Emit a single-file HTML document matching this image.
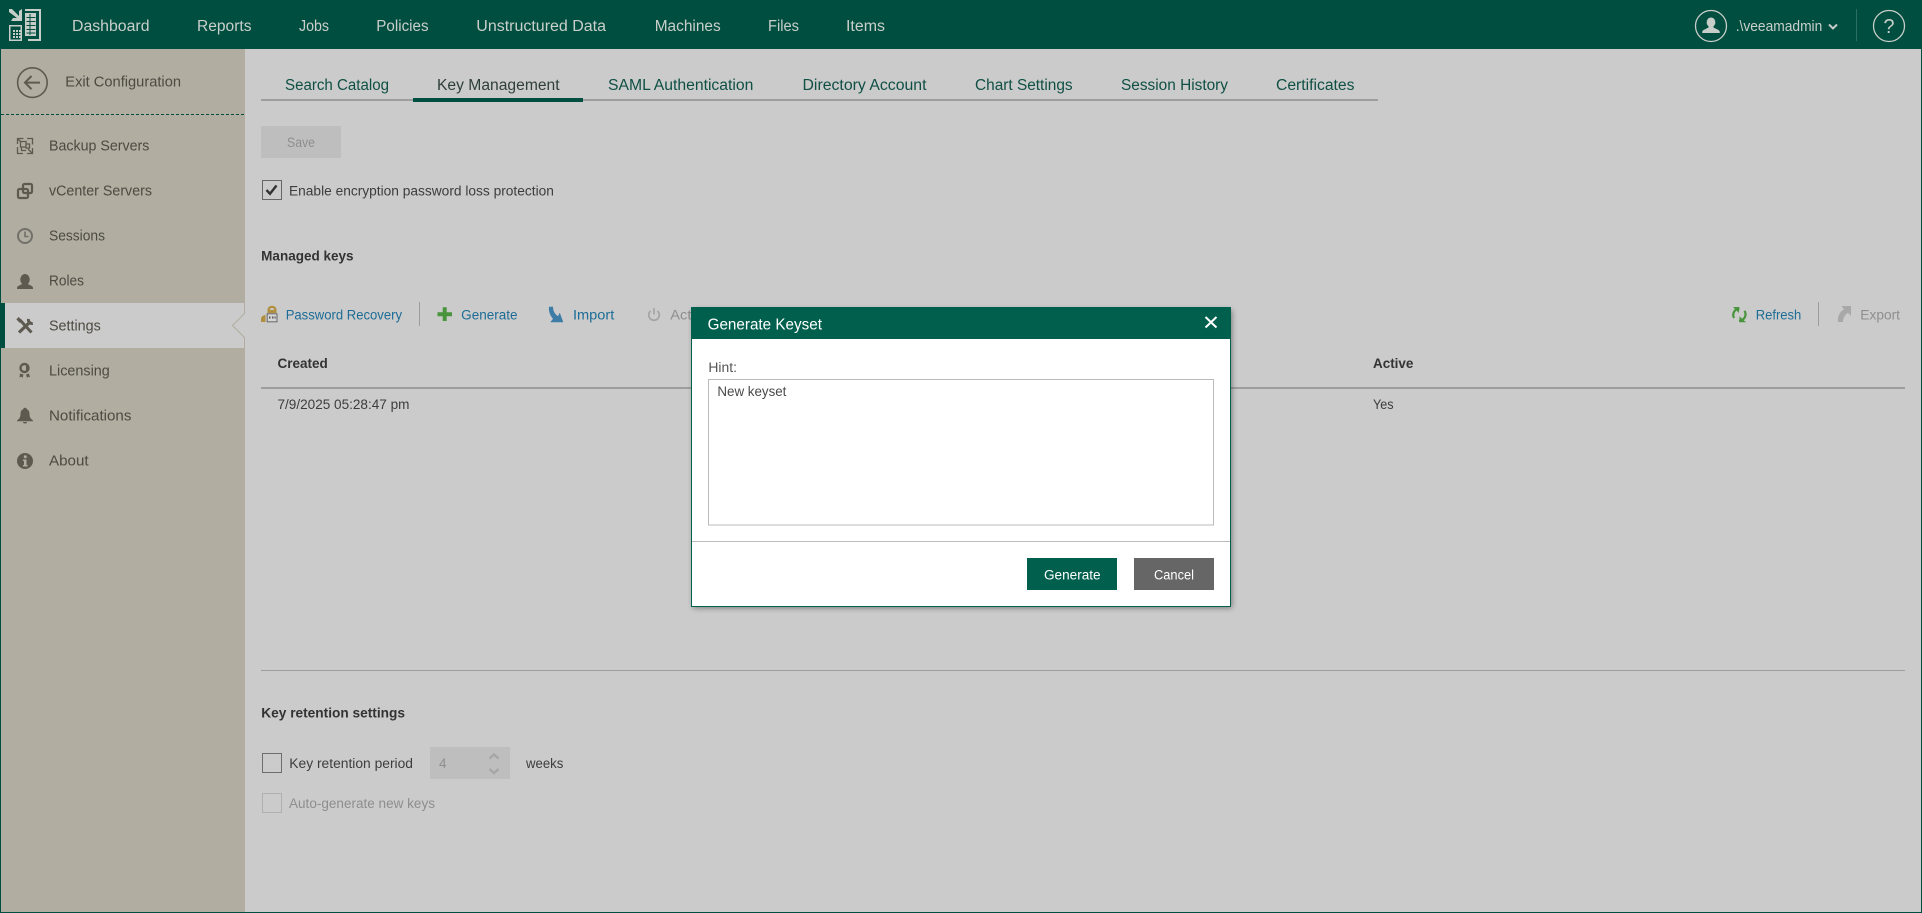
<!DOCTYPE html>
<html><head><meta charset="utf-8"><title>Key Management</title>
<style>
html,body{margin:0;padding:0;background:#cbcbcb;overflow:hidden}
svg{display:block}
text{font-family:"Liberation Sans",sans-serif;font-size:13.400px;fill:#3d3d3d}
.nav{font-size:15.500px;fill:#c9cfcb}
.tab{font-size:15.500px;fill:#0f4f44}
.side{font-size:14.500px;fill:#4d4a42}
.b{font-weight:bold;fill:#333}
.link{fill:#1c6c96}
.dis{fill:#8e8e8e}
.ic{fill:#5e5a50}
</style></head><body>
<svg width="1922" height="913" viewBox="0 0 1922 913" xmlns="http://www.w3.org/2000/svg">
<defs><filter id="sh" x="-5%" y="-5%" width="110%" height="110%"><feGaussianBlur stdDeviation="3"/></filter></defs>
<rect width="1922" height="913" fill="#cbcbcb"/>
<!-- sidebar -->
<rect x="1" y="49" width="244" height="864" fill="#b1ada1"/>
<rect x="0" y="49" width="1" height="864" fill="#004e3f"/>
<rect x="1921" y="49" width="1" height="864" fill="#004e3f"/>
<rect x="0" y="912" width="1922" height="1" fill="#004e3f"/>
<!-- header -->
<rect width="1922" height="49" fill="#004e3f"/>
<g fill="#c7cdc9">
<path d="M9 9h3l7 7v-5l3-2v12H11l2-3h4L9 12z"/>
<path d="M9 25h13v16H9zM10.500 26.500v13h10v-13z" fill-rule="evenodd"/>
<path d="M13 30h2v2h-2zM16 30h2v2h-2zM19 30h1.500v2H19zM13 33h2v2h-2zM16 33h2v2h-2zM19 33h1.500v2H19zM13 36h2v2h-2zM16 36h2v2h-2zM19 36h1.500v2H19z"/>
<path d="M25 13h11v23H25z"/>
<path d="M25 9h16v32H28v-2h11V11H25z"/>
</g>
<path d="M30 14v21M26.500 17.500h9M26.500 21.500h9M26.500 25.500h9M26.500 29.500h9M26.500 33h9" stroke="#004e3f" stroke-width="1" fill="none"/>
<text class="nav" x="72" y="31" textLength="77.500" lengthAdjust="spacingAndGlyphs">Dashboard</text>
<text class="nav" x="197" y="31" textLength="54.500" lengthAdjust="spacingAndGlyphs">Reports</text>
<text class="nav" x="299" y="31" textLength="30" lengthAdjust="spacingAndGlyphs">Jobs</text>
<text class="nav" x="376.300" y="31" textLength="52.300" lengthAdjust="spacingAndGlyphs">Policies</text>
<text class="nav" x="476.300" y="31" textLength="129.700" lengthAdjust="spacingAndGlyphs">Unstructured Data</text>
<text class="nav" x="654.700" y="31" textLength="66" lengthAdjust="spacingAndGlyphs">Machines</text>
<text class="nav" x="768" y="31" textLength="31" lengthAdjust="spacingAndGlyphs">Files</text>
<text class="nav" x="846" y="31" textLength="39" lengthAdjust="spacingAndGlyphs">Items</text>
<circle cx="1711" cy="26" r="15.500" fill="none" stroke="#c7cdc9" stroke-width="1.300"/>
<path d="M1711 17.500a4.300 4.800 0 0 1 2.500 8.700v1.300l5 2.500c1 .5 1.300 1.500 1.300 3h-17.600c0-1.500.3-2.500 1.300-3l5-2.500v-1.300a4.300 4.800 0 0 1 2.500-8.700z" fill="#c7cdc9"/>
<text class="nav" style="font-size:14.400px" x="1735.700" y="31" textLength="86.600" lengthAdjust="spacingAndGlyphs">.\veeamadmin</text>
<path d="M1829 24.500l4 4 4-4" fill="none" stroke="#c7cdc9" stroke-width="2"/>
<rect x="1856" y="9" width="1" height="32" fill="#2b6f60"/>
<circle cx="1889" cy="26" r="15.500" fill="none" stroke="#c7cdc9" stroke-width="1.300"/>
<text class="nav" style="font-size:20px" x="1883.500" y="33" textLength="11" lengthAdjust="spacingAndGlyphs">?</text>
<!-- sidebar content -->
<circle cx="32.400" cy="82.600" r="14.800" fill="none" stroke="#5e5a50" stroke-width="1.600"/>
<path d="M40 82.600H26M31.500 76l-6.500 6.600 6.500 6.600" fill="none" stroke="#5e5a50" stroke-width="2"/>
<text class="side" x="65.300" y="86.700" textLength="115.700" lengthAdjust="spacingAndGlyphs">Exit Configuration</text>
<line x1="1" y1="114.500" x2="245" y2="114.500" stroke="#004e3f" stroke-width="1" stroke-dasharray="3 2"/>

<g fill="none" stroke="#5e5a50" stroke-width="1.300">
<path d="M17.500 144v-5.500h6M27 138.500h5.500v6M32.500 148v5.500H27M23 153.500h-5.500V147"/>
<path d="M20.500 141.500h5.500v5.500h-5.500zM26 144h3.500v4H26zM21.500 147v3.500h4.500"/>
<path d="M18 139l3 3M28 149l4 4"/>
</g>
<text class="side" x="49" y="150.700" textLength="100.400" lengthAdjust="spacingAndGlyphs">Backup Servers</text>
<g fill="none" stroke="#5e5a50" stroke-width="2.200"><rect x="18" y="189" width="10" height="9" rx="1.500"/><rect x="23" y="184" width="9" height="9" rx="1.500"/></g>
<text class="side" x="49" y="195.700" textLength="103" lengthAdjust="spacingAndGlyphs">vCenter Servers</text>
<circle cx="25" cy="236" r="7" fill="none" stroke="#72706a" stroke-width="2"/>
<path d="M25 231.500v5h3.500" fill="none" stroke="#72706a" stroke-width="1.600"/>
<text class="side" x="49" y="240.700" textLength="56" lengthAdjust="spacingAndGlyphs">Sessions</text>
<path class="ic" d="M25 274a5 5.500 0 0 1 3.300 9.300v1l3.700 1.800c.8.500 1 1.400 1 2.900H17c0-1.500.2-2.400 1-2.900l3.700-1.800v-1a5 5.500 0 0 1 3.300-9.300z"/>
<text class="side" x="49" y="285.700" textLength="35" lengthAdjust="spacingAndGlyphs">Roles</text>

<rect x="0" y="303" width="5" height="45" fill="#004e3f"/>
<rect x="5" y="303" width="240" height="45" fill="#cbcbcb"/>
<path d="M244.500 303v10.500l-12 12 12 12V348" fill="none" stroke="#b1ada1" stroke-width="1"/>
<g fill="none" stroke="#5e5a50"><path d="M20 320l11.500 12.500" stroke-width="3"/><path d="M29 323l-10 9.500" stroke-width="3.200"/><path d="M28.500 319a3.800 3.800 0 0 0 4.300 4.500" stroke-width="3"/><path d="M17.500 318.200l3.500 3.500" stroke-width="3.400"/></g>
<text class="side" x="49" y="330.700" textLength="51.800" lengthAdjust="spacingAndGlyphs">Settings</text>

<circle cx="24.500" cy="368" r="4" fill="none" stroke="#5e5a50" stroke-width="2.400"/>
<path d="M26 364.500a4 4 0 0 1 0 7z" fill="#5e5a50"/>
<path class="ic" d="M20 373.500l3.500 1-1 3.500-1-1.200-2 .5zM29 373.500l-3 1 1 3.500 1-1.200 2 .5z"/>
<text class="side" x="49" y="375.700" textLength="60.800" lengthAdjust="spacingAndGlyphs">Licensing</text>
<path class="ic" d="M25 407.700c1.200 0 1.800.7 1.800 1.600 2 .7 2.700 2.500 2.700 5 0 3 1.300 4.700 3.500 6.200v.8H17v-.8c2.200-1.500 3.500-3.200 3.500-6.200 0-2.500.7-4.300 2.700-5 0-.9.600-1.600 1.800-1.600zM23 422h4a2 1.500 0 0 1-4 0z"/>
<text class="side" x="49" y="420.700" textLength="82.400" lengthAdjust="spacingAndGlyphs">Notifications</text>
<circle class="ic" cx="25" cy="461" r="8"/>
<circle cx="25.300" cy="456.800" r="1.500" fill="#b1ada1"/>
<path d="M23 459.500h3.500v5.500h1v1.500H23V465h1v-4h-1z" fill="#b1ada1"/>
<text class="side" x="49" y="465.700" textLength="39.600" lengthAdjust="spacingAndGlyphs">About</text>

<!-- tabs -->
<rect x="261" y="99" width="1117" height="2" fill="#9e9e9e"/>
<rect x="413" y="98" width="170" height="4" fill="#004e3f"/>
<text class="tab" x="285" y="90" textLength="104" lengthAdjust="spacingAndGlyphs">Search Catalog</text>
<text class="tab" style="fill:#2f3f3b" x="437" y="90" textLength="122.600" lengthAdjust="spacingAndGlyphs">Key Management</text>
<text class="tab" x="608" y="90" textLength="145.400" lengthAdjust="spacingAndGlyphs">SAML Authentication</text>
<text class="tab" x="802.500" y="90" textLength="124" lengthAdjust="spacingAndGlyphs">Directory Account</text>
<text class="tab" x="975" y="90" textLength="97.600" lengthAdjust="spacingAndGlyphs">Chart Settings</text>
<text class="tab" x="1121" y="90" textLength="107" lengthAdjust="spacingAndGlyphs">Session History</text>
<text class="tab" x="1276" y="90" textLength="78.500" lengthAdjust="spacingAndGlyphs">Certificates</text>

<rect x="261" y="126" width="80" height="32" fill="#bebebe"/>
<text class="dis" x="287" y="147" textLength="28" lengthAdjust="spacingAndGlyphs">Save</text>
<rect x="262.500" y="180.500" width="19" height="19" fill="none" stroke="#666"/>
<path d="M266.500 190l3.500 3.800 6.500-8.300" fill="none" stroke="#333" stroke-width="2.400"/>
<text x="289" y="195.300" textLength="264.900" lengthAdjust="spacingAndGlyphs">Enable encryption password loss protection</text>
<text class="b" x="261.200" y="260.700" textLength="92.300" lengthAdjust="spacingAndGlyphs">Managed keys</text>

<!-- toolbar -->
<path d="M267.500 313v-3.500a4.500 3.800 0 0 1 9 0v3.500h-2.500v-3.500a2 1.500 0 0 0-4 0v3.500z" fill="#b08f3e"/>
<path d="M270 310h4v3h-4z" fill="#b08f3e"/>
<rect x="267.200" y="313.800" width="9.800" height="8" fill="#d5d5d5" stroke="#666"/>
<path d="M269 316.500h1.500v2H269zM272 316.500h1.500v2H272zM274.500 316.500h1.200v2h-1.200z" fill="#555"/>
<path d="M261 322v-3c0-2 2-4 4.500-4v7z" fill="#b08f3e"/>
<text class="link" x="285.700" y="319.300" textLength="116.300" lengthAdjust="spacingAndGlyphs">Password Recovery</text>
<rect x="419" y="302" width="1" height="24" fill="#9c9c9c"/>
<path d="M442.700 307.300h4v5h5.300v4h-5.300v4.700h-4v-4.700h-5.200v-4h5.200z" fill="#49953d"/>
<text class="link" x="461.200" y="319.300" textLength="56.300" lengthAdjust="spacingAndGlyphs">Generate</text>
<path d="M549 306.700h4c0 4 1.500 7 5 9.500l1.800-3.500 3.500 9.600h-13l2.700-3.500c-3-3.500-4.500-7.500-4-12.100z" fill="#3c7ca6"/>
<text class="link" x="573" y="319.300" textLength="41.300" lengthAdjust="spacingAndGlyphs">Import</text>
<path d="M650.500 311a5.300 5.300 0 1 0 7 0" fill="none" stroke="#a3a3a3" stroke-width="1.600"/>
<path d="M654 308v6.500" stroke="#a3a3a3" stroke-width="1.600"/>
<text class="dis" x="670.300" y="319.300" textLength="52" lengthAdjust="spacingAndGlyphs">Activate</text>
<g fill="none" stroke="#49953d" stroke-width="2.200"><path d="M1739.500 308.500a6.500 6.500 0 0 0-5.500 9.500"/><path d="M1739 320.800a6.500 6.500 0 0 0 5.500-10"/></g>
<path d="M1733 307h6v6zM1746 322.300h-6.500v-6z" fill="#49953d"/>
<text class="link" x="1755.700" y="319.300" textLength="45.600" lengthAdjust="spacingAndGlyphs">Refresh</text>
<rect x="1818" y="302" width="1" height="24" fill="#9c9c9c"/>
<path d="M1838 322c-.5-6 1.500-10 6-12.500l-2.500-3.500h9.500v10l-3-3.200c-3 2-5 5-5 9.200z" fill="#a8a8a8"/>
<text class="dis" x="1860.300" y="319.300" textLength="39.700" lengthAdjust="spacingAndGlyphs">Export</text>

<!-- table -->
<text class="b" x="277.500" y="368" textLength="50.300" lengthAdjust="spacingAndGlyphs">Created</text>
<text class="b" x="1373" y="368" textLength="40.400" lengthAdjust="spacingAndGlyphs">Active</text>
<rect x="261" y="387" width="1644" height="2" fill="#9e9e9e"/>
<text x="277.500" y="409" textLength="131.900" lengthAdjust="spacingAndGlyphs">7/9/2025 05:28:47 pm</text>
<text x="1373" y="409" textLength="20.500" lengthAdjust="spacingAndGlyphs">Yes</text>

<!-- retention -->
<rect x="261" y="670" width="1644" height="1" fill="#9e9e9e"/>
<text class="b" x="261.300" y="717.700" textLength="143.700" lengthAdjust="spacingAndGlyphs">Key retention settings</text>
<rect x="262.500" y="753.500" width="19" height="19" fill="none" stroke="#6e6e6e"/>
<text x="289.300" y="768" textLength="123.700" lengthAdjust="spacingAndGlyphs">Key retention period</text>
<rect x="430" y="747" width="80" height="32" fill="#bebebe"/>
<text class="dis" x="439" y="768" textLength="7.500" lengthAdjust="spacingAndGlyphs">4</text>
<path d="M489.500 758.500l4.500-4 4.500 4M489.500 769l4.500 4 4.500-4" fill="none" stroke="#a6a6a6" stroke-width="2.400"/>
<text x="526" y="768" textLength="37.300" lengthAdjust="spacingAndGlyphs">weeks</text>
<rect x="262.500" y="793.500" width="19" height="19" fill="none" stroke="#b0b0b0"/>
<text class="dis" x="289" y="808" textLength="146" lengthAdjust="spacingAndGlyphs">Auto-generate new keys</text>

<!-- dialog -->
<rect x="693" y="310" width="539" height="298" fill="#000" opacity=".4" filter="url(#sh)"/>
<rect x="691.500" y="307.500" width="539" height="299" fill="#fff" stroke="#00604d"/>
<rect x="691" y="307" width="540" height="32" fill="#00604d"/>
<text style="font-size:15.500px;fill:#fff" x="707.600" y="329.300" textLength="114.400" lengthAdjust="spacingAndGlyphs">Generate Keyset</text>
<path d="M1205.500 317l11 10.500M1216.500 317l-11 10.500" stroke="#fff" stroke-width="2"/>
<text style="fill:#555" x="708.400" y="372" textLength="28.600" lengthAdjust="spacingAndGlyphs">Hint:</text>
<rect x="708.500" y="379.500" width="505" height="145.500" fill="#fff" stroke="#bbb"/>
<text style="fill:#4a4a4a" x="717.400" y="396" textLength="69" lengthAdjust="spacingAndGlyphs">New keyset</text>
<rect x="692" y="541" width="538" height="1" fill="#bbb"/>
<rect x="1027" y="558" width="90" height="32" fill="#00604d"/>
<text style="fill:#fff" x="1044" y="579.300" textLength="56.600" lengthAdjust="spacingAndGlyphs">Generate</text>
<rect x="1134" y="558" width="80" height="32" fill="#666"/>
<text style="fill:#fff" x="1154" y="579.300" textLength="40" lengthAdjust="spacingAndGlyphs">Cancel</text>
</svg>
</body></html>
